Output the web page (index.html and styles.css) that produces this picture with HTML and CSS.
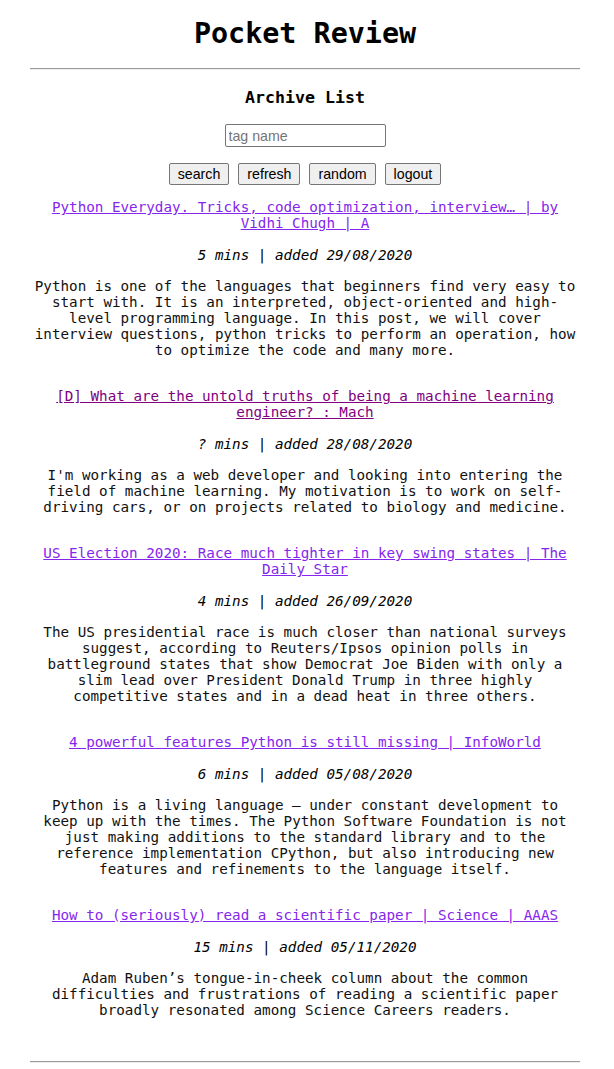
FILE: index.html
```html
<!DOCTYPE html>
<html lang="en">
<head>
<meta charset="utf-8">
<title>Pocket Review</title>
<link rel="stylesheet" href="styles.css">
</head>
<body>
<div class="page">
  <h1 class="title">Pocket Review</h1>
  <hr class="rule">
  <h3 class="section">Archive List</h3>
  <form class="search">
    <input class="tag-input" type="text" placeholder="tag name">
    <div class="buttons">
      <button class="btn" type="button">search</button>
      <button class="btn" type="button">refresh</button>
      <button class="btn" type="button">random</button>
      <button class="btn" type="button">logout</button>
    </div>
  </form>
  <ul class="list">
    <li class="item">
      <a class="item-title" href="#">Python Everyday. Tricks, code optimization, interview… | by Vidhi Chugh | A</a>
      <p class="meta">5 mins | added 29/08/2020</p>
      <p class="desc">Python is one of the languages that beginners find very easy to start with. It is an interpreted, object-oriented and high-level programming language. In this post, we will cover interview questions, python tricks to perform an operation, how to optimize the code and many more.</p>
    </li>
    <li class="item">
      <a class="item-title visited" href="#">[D] What are the untold truths of being a machine learning engineer? : Mach</a>
      <p class="meta">? mins | added 28/08/2020</p>
      <p class="desc">I'm working as a web developer and looking into entering the field of machine learning. My motivation is to work on self-driving cars, or on projects related to biology and medicine.</p>
    </li>
    <li class="item">
      <a class="item-title" href="#">US Election 2020: Race much tighter in key swing states | The Daily Star</a>
      <p class="meta">4 mins | added 26/09/2020</p>
      <p class="desc">The US presidential race is much closer than national surveys suggest, according to Reuters/Ipsos opinion polls in battleground states that show Democrat Joe Biden with only a slim lead over President Donald Trump in three highly competitive states and in a dead heat in three others.</p>
    </li>
    <li class="item">
      <a class="item-title" href="#">4 powerful features Python is still missing | InfoWorld</a>
      <p class="meta">6 mins | added 05/08/2020</p>
      <p class="desc">Python is a living language — under constant development to keep up with the times. The Python Software Foundation is not just making additions to the standard library and to the reference implementation CPython, but also introducing new features and refinements to the language itself.</p>
    </li>
    <li class="item">
      <a class="item-title" href="#">How to (seriously) read a scientific paper | Science | AAAS</a>
      <p class="meta">15 mins | added 05/11/2020</p>
      <p class="desc">Adam Ruben’s tongue-in-cheek column about the common difficulties and frustrations of reading a scientific paper broadly resonated among Science Careers readers.</p>
    </li>
  </ul>
  <hr class="rule rule-bottom">
</div>
</body>
</html>
```

FILE: styles.css
```css
html, body {
  margin: 0;
  padding: 0;
  background: #ffffff;
}

body {
  font-family: "DejaVu Sans Mono", monospace;
  font-size: 14.25px;
  line-height: 16px;
  color: #111111;
}

.page {
  width: 550px;
  margin-left: 30px;
  text-align: center;
}

.title {
  margin: 17px 0 0;
  font-size: 28.4px;
  line-height: 33px;
  font-weight: bold;
  color: #000;
}

.rule {
  margin: 18px 0 0;
  height: 0;
  border: 0;
  border-top: 1px solid #9a9a9a;
  border-bottom: 1px solid #eeeeee;
}

.section {
  margin: 18px 0 0;
  font-size: 16.6px;
  line-height: 20px;
  font-weight: bold;
  color: #000;
}

.search {
  margin: 16px 0 0;
  display: flex;
  flex-direction: column;
  align-items: center;
}

.tag-input {
  box-sizing: border-box;
  width: 161px;
  height: 23px;
  margin: 0;
  padding: 1px 3px;
  border: 1px solid #767676;
  border-radius: 2px;
  font-family: "Liberation Sans", Arial, sans-serif;
  font-size: 14.2px;
  color: #000;
  background: #fff;
}

.tag-input::placeholder {
  color: #757575;
}

.buttons {
  margin-top: 16px;
  display: flex;
  justify-content: center;
  gap: 9px;
}

.btn {
  box-sizing: border-box;
  height: 22px;
  margin: 0;
  padding: 0 8px;
  border: 1px solid #767676;
  border-radius: 2px;
  background: #efefef;
  font-family: "Liberation Sans", Arial, sans-serif;
  font-size: 14.2px;
  line-height: 18px;
  color: #000;
}

.list {
  list-style: none;
  margin: 14px 0 0;
  padding: 0 3px;
}

.item {
  margin: 0 0 30px;
}

.item-title {
  display: block;
  color: #8526ec;
  text-decoration: underline;
}

.item-title.visited {
  color: #800080;
}

.meta {
  margin: 16px 0 0;
  font-style: italic;
  color: #000;
}

.desc {
  margin: 15px 0 0;
}

.rule-bottom {
  margin-top: 43px;
}
```
